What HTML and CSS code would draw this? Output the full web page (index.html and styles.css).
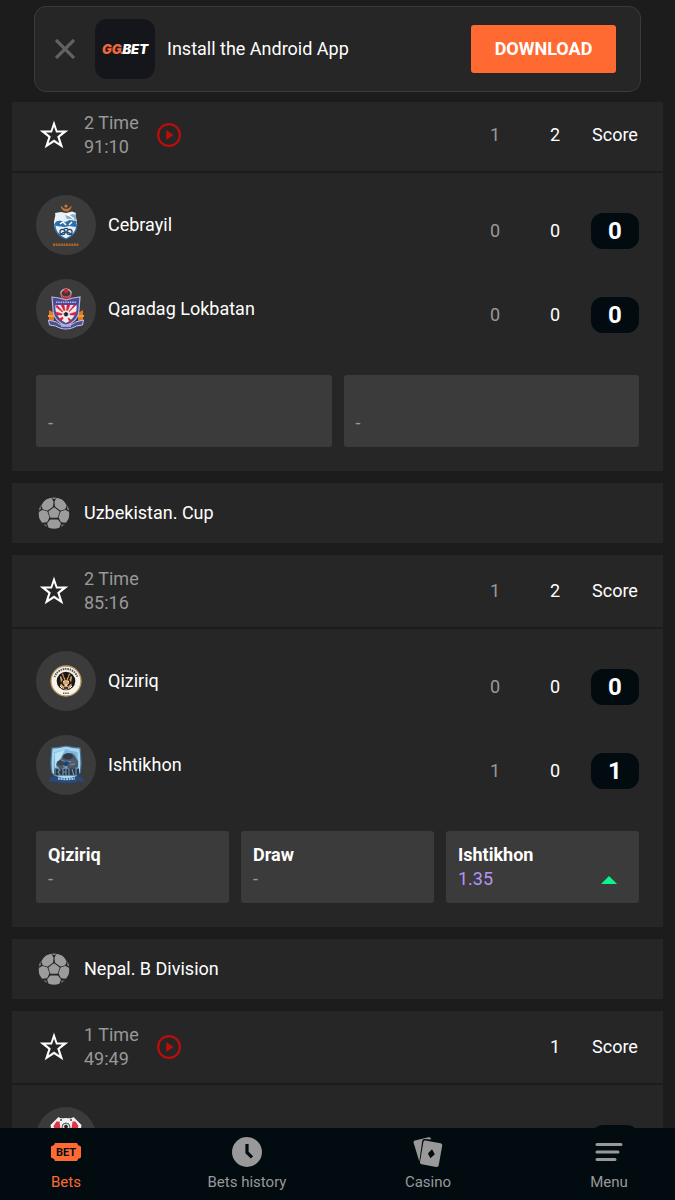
FILE: index.html
```html
<!DOCTYPE html>
<html lang="en">
<head>
    <meta charset="UTF-8">
    <meta name="viewport" content="width=device-width, initial-scale=1.0">
    <title>Live bets</title>
    <link rel="stylesheet" href="styles.css">
</head>
<body>
    <!-- Shared icons -->
    <svg class="sprite" aria-hidden="true">
        <symbol id="star" viewBox="0 0 30 30">
            <path fill-rule="evenodd" fill="#fff" d="M15 .6L18.300 10.400H29.300L20.700 17.200 24.300 28.300 15 22.200 5.700 28.300 9.300 17.200.7 10.400H11.700zM15 6.800L13 12.600H6.900L11.800 16.600 9.600 23.200 15 19.600 20.400 23.200 18.200 16.600 23.100 12.600H17z"/>
        </symbol>
        <symbol id="play" viewBox="0 0 24 24">
            <circle cx="12" cy="12" r="10.9" fill="none" stroke="#be0b0b" stroke-width="2.2"/>
            <path d="M9.2 7l7.4 5-7.4 5z" fill="#be0b0b"/>
        </symbol>
        <symbol id="ball" viewBox="0 0 32 32">
            <clipPath id="ball-clip"><circle cx="16" cy="16" r="15.400"/></clipPath>
            <g clip-path="url(#ball-clip)" fill="#9c9c9c" stroke="#9c9c9c" stroke-width="2.400" stroke-linejoin="round">
                <path d="M16 11.8l4.3 3.2-1.5 4.6h-5.6L11.700 15z"/>
                <path d="M4.600 8.500L8.300 2.300l4.700 0 1.300 2.700-.4 4-4.500 3.300-3.700-.9z"/>
                <path d="M27.400 8.500L23.700 2.300l-4.700 0-1.300 2.700.4 4 4.500 3.300 3.700-.9z"/>
                <path d="M1.700 15.800l2.800-1.600 4 1.200 1.700 4.900-1.800 3.700-4.400.5-2.800-3z"/>
                <path d="M30.300 15.800l-2.800-1.600-4 1.200-1.700 4.900 1.800 3.700 4.400.5 2.800-3z"/>
                <path d="M12.700 23.700h6.600l2.300 3-1.800 5.300h-7.600l-1.800-5.300z"/>
            </g>
            <g clip-path="url(#ball-clip)" fill="#888">
                <path d="M13.500 0h5l-1.300 1.900h-2.400zM0 7h2l1 5-3 2zM32 7h-2l-1 5 3 2zM5 27.500l3.300.2.6 3-2 0zM27 27.500l-3.300.2-.6 3 2 0z"/>
            </g>
        </symbol>
    </svg>

    <div class="app">
        <header class="top">
            <div class="banner">
                <button type="button" class="banner-close" aria-label="Close">
                    <svg width="20" height="20" viewBox="0 0 20 20"><path d="M1 1l18 18M19 1L1 19" stroke="#626262" stroke-width="3.200"/></svg>
                </button>
                <div class="app-logo"><span class="gg">GG</span><span class="dot">.</span>BET</div>
                <p class="banner-text">Install the Android App</p>
                <button type="button" class="download">DOWNLOAD</button>
            </div>
        </header>

        <main class="content">
            <section class="card">
                <div class="card-head">
                    <button type="button" class="fav" aria-label="Favourite"><svg width="30" height="30"><use href="#star"/></svg></button>
                    <div class="time">2 Time<br>91:10</div>
                    <button type="button" class="stream" aria-label="Watch"><svg width="24" height="24"><use href="#play"/></svg></button>
                    <div class="scores">
                        <span class="past">1</span>
                        <span>2</span>
                        <span>Score</span>
                    </div>
                </div>
                <div class="card-body">
                    <div class="team">
                        <div class="team-logo">
                            <svg width="60" height="60" viewBox="0 0 60 60">
                                <path d="M25.500 11.500c.5 6 9 6 9.500 0-2 3.800-7.500 3.800-9.500 0z" fill="#c97a35" stroke="#c97a35"/>
                                <circle cx="30" cy="11" r="1.600" fill="#c97a35"/>
                                <path d="M19 18l6-1 5 1 6-1.500 4 1.500c-1 3 1 6 1 10 0 8-4 13-11 16-7-3-12-8-12-16 0-4 2-7 1-10z" fill="#e9f0f6"/>
                                <path d="M18.500 29c1-3 4-4 7-3l4 1 4-2 7 1c0 3 0 4-1 6l-6-1-5 1-8-1z" fill="#2c6dab"/>
                                <path d="M29 20l3 1 5-2 3 1v5l-5-1-4 0z" fill="#8eadc8"/>
                                <path d="M31 19l7 5M24 29l3-2 3 3M33 30l3-3" stroke="#fff" stroke-width="1.500" fill="none"/>
                                <path d="M19 29c-1 7 4 12 11 15 7-3 11-8 11-15" fill="none" stroke="#2c6dab" stroke-width="1.300"/>
                                <g fill="none" stroke="#23466c" stroke-width="1.200"><circle cx="26.500" cy="37" r="2.600"/><circle cx="33.500" cy="37" r="2.600"/><path d="M24 40c4-4 8-4 12 0M27 35c2-2 4-2 6 0"/></g>
                                <path d="M17 49.700h26" stroke="#a8652d" stroke-width="2.400" stroke-dasharray="2 .6"/>
                            </svg>
                        </div>
                        <div class="team-name">Cebrayil</div>
                        <div class="scores">
                            <span class="past">0</span>
                            <span>0</span>
                            <span class="total">0</span>
                        </div>
                    </div>
                    <div class="team">
                        <div class="team-logo">
                            <svg width="60" height="60" viewBox="0 0 60 60">
                                <path d="M25 15c-1-3 3-5 5-5s6 2 5 5" fill="none" stroke="#d3a7ad" stroke-width="1.300"/>
                                <path d="M25 15c0 8 10 8 10 0-2 4-8 4-10 0z" fill="#c62536" stroke="#ee7d88" stroke-width=".8"/>
                                <circle cx="30" cy="12" r="2.200" fill="#ce2435"/>
                                <path d="M13 31l5 3v8l-5-1zM47 31l-5 3v8l5-1z" fill="#e07b20"/>
                                <path d="M12 37h6M42 37h6" stroke="#f09b42" stroke-width="2"/>
                                <path d="M16 18l7 1 7 2 7-2 7-1-1 12c0 9-5 13-13 17-8-4-13-8-13-17z" fill="#4a4a9a" stroke="#b9b8d7" stroke-width="1.200"/>
                                <path d="M19.500 26h21c1 8-3 14-10.500 18-7.500-4-11.500-10-10.500-18z" fill="#f2e8ec"/>
                                <path d="M30 36L20 28l1-2zM30 36l-5-10h3zM30 36l1-10h3zM30 36l8-10h2zM30 36l10-3-1 3zM30 36l6 6-2 1zM30 36l-5 6-2-2zM30 36l-9 0-1-3z" fill="#d92139" stroke="#d92139" stroke-width=".5"/>
                                <path d="M20 23.200h20" stroke="#bbb9dc" stroke-width="1.500" stroke-dasharray="1.500 .8"/>
                                <circle cx="30" cy="35.500" r="4" fill="#eee"/>
                                <path d="M30 33l2 1.600-.8 2.500h-2.400l-.8-2.500zM26.500 35h1M32.500 35h1" fill="#222" stroke="#222" stroke-width=".5"/>
                                <path d="M12.500 41l8 2c2 4 17 4 19 0l8-2-1 5-6 1c-7 4-14 4-21 0l-6-1z" fill="#4b4d9e" stroke="#c7c6df"/>
                                <path d="M25 47h10" stroke="#b8b8dc" stroke-width="1.600"/>
                            </svg>
                        </div>
                        <div class="team-name">Qaradag Lokbatan</div>
                        <div class="scores">
                            <span class="past">0</span>
                            <span>0</span>
                            <span class="total">0</span>
                        </div>
                    </div>
                    <div class="odds">
                        <button type="button" class="odd">
                            <span class="odd-name"></span>
                            <span class="odd-value">-</span>
                        </button>
                        <button type="button" class="odd">
                            <span class="odd-name"></span>
                            <span class="odd-value">-</span>
                        </button>
                    </div>
                </div>
            </section>

            <h2 class="league"><svg width="32" height="32"><use href="#ball"/></svg>Uzbekistan. Cup</h2>

            <section class="card">
                <div class="card-head">
                    <button type="button" class="fav" aria-label="Favourite"><svg width="30" height="30"><use href="#star"/></svg></button>
                    <div class="time">2 Time<br>85:16</div>
                    <div class="scores">
                        <span class="past">1</span>
                        <span>2</span>
                        <span>Score</span>
                    </div>
                </div>
                <div class="card-body">
                    <div class="team">
                        <div class="team-logo">
                            <svg width="60" height="60" viewBox="0 0 60 60">
                                <circle cx="30" cy="30" r="15" fill="#f8f4ec" stroke="#bc9a65" stroke-width="1.300"/>
                                <path d="M18.500 26a12.200 12.200 0 0 1 23 0" fill="none" stroke="#555" stroke-width="2" stroke-dasharray="1.300 .9 1.700 .8"/>
                                <path d="M27 42.200h6" stroke="#555" stroke-width="1.600" stroke-dasharray="1.400 .8"/>
                                <circle cx="30" cy="30" r="9.300" fill="#1d1712"/>
                                <path d="M24 26l3-4 1 4 2 2 2-2 1-4 3 4-1 6 1 3-3 3-3 1-3-1-3-3 1-3z" fill="#d2a169"/>
                                <path d="M25.500 24l2 5-2 3 3 3M34.500 24l-2 5 2 3-3 3M30 24v5M28 37h4" fill="none" stroke="#1d1712" stroke-width="1.500"/>
                                <path d="M27 30l1.500 1M33 30l-1.500 1M28.500 34h3M24 35l2 2M36 35l-2 2" stroke="#fff"/>
                            </svg>
                        </div>
                        <div class="team-name">Qiziriq</div>
                        <div class="scores">
                            <span class="past">0</span>
                            <span>0</span>
                            <span class="total">0</span>
                        </div>
                    </div>
                    <div class="team">
                        <div class="team-logo">
                            <svg width="60" height="60" viewBox="0 0 60 60">
                                <path d="M16 13c5 0 9-1 14-2 5 1 9 2 14 2 1 9 2 18 0 25-3 4-8 7-14 9-6-2-11-5-14-9-2-7-1-16 0-25z" fill="#a8d5f0" stroke="#426f9a" stroke-width="1.200"/>
                                <path d="M18.500 17c5-1 8-1 11.500-3 4 2 7 2 11.500 3l1 16h-25z" fill="#7eb5dc"/>
                                <path d="M19 18l10-3-8 14-2 4z" fill="#b9e2f6"/>
                                <path d="M26 23c0-3 3-5 7-5s6 2 7 5l2 3v6l-6 3-6-3-6 2-4-4 1-3z" fill="#4c5865"/>
                                <ellipse cx="32" cy="21.500" rx="5" ry="3" fill="#303a46"/>
                                <ellipse cx="25" cy="28" rx="4" ry="2.500" fill="#38444f"/>
                                <ellipse cx="37" cy="27" rx="4" ry="2.500" fill="#52606b"/>
                                <path d="M24 24l5 3M29 26l6 1M34 30l5-1M27 31l5 1" stroke="#7893aa"/>
                                <path d="M29 26l4 1-2 4-3-1z" fill="#193f78"/>
                                <path d="M18 37h25" stroke="#26384d" stroke-width="7"/>
                                <path d="M19 34v7M22 34l2 1-2 2 2 3-2 1M27 34v7M27 37h3M30 34v7M33 34v7M36 34l2 7M40 34v7" fill="none" stroke="#7b93a7" stroke-width="1.100"/>
                                <path d="M14 42l6-1c6 3 15 3 21 0l6 2 1 4-5-1c-8 3-18 3-26 0l-4 1z" fill="#244b7c"/>
                                <path d="M22 43.500c5 1 11 1 17 0" fill="none" stroke="#a4c8e5" stroke-width="2" stroke-dasharray="2 .7"/>
                            </svg>
                        </div>
                        <div class="team-name">Ishtikhon</div>
                        <div class="scores">
                            <span class="past">1</span>
                            <span>0</span>
                            <span class="total">1</span>
                        </div>
                    </div>
                    <div class="odds">
                        <button type="button" class="odd">
                            <span class="odd-name">Qiziriq</span>
                            <span class="odd-value">-</span>
                        </button>
                        <button type="button" class="odd">
                            <span class="odd-name">Draw</span>
                            <span class="odd-value">-</span>
                        </button>
                        <button type="button" class="odd">
                            <span class="odd-name">Ishtikhon</span>
                            <span class="odd-value active">1.35 <svg width="36" height="10" viewBox="0 0 36 10"><path d="M18 2l8 8H10z" fill="#0bf58a"/></svg></span>
                        </button>
                    </div>
                </div>
            </section>

            <h2 class="league"><svg width="32" height="32"><use href="#ball"/></svg>Nepal. B Division</h2>

            <section class="card">
                <div class="card-head">
                    <button type="button" class="fav" aria-label="Favourite"><svg width="30" height="30"><use href="#star"/></svg></button>
                    <div class="time">1 Time<br>49:49</div>
                    <button type="button" class="stream" aria-label="Watch"><svg width="24" height="24"><use href="#play"/></svg></button>
                    <div class="scores">
                        <span>1</span>
                        <span>Score</span>
                    </div>
                </div>
                <div class="card-body">
                    <div class="team">
                        <div class="team-logo">
                            <svg width="60" height="60" viewBox="0 0 60 60">
                                <path d="M14.500 18l8-8c2 2 4 1 7.500 1s5.500 1 7.500-1l8 8c-2 14-6 22-15.500 28-9.500-6-13.500-14-15.500-28z" fill="#f3f1f1"/>
                                <path d="M17.500 19l3-4.500 3 0 1 7.500h-6zM42.500 19l-3-4.500-3 0-1 7.500h6z" fill="#e03345"/>
                                <path d="M24 13h2M34 13h2" stroke="#444" stroke-width="1.300"/>
                                <circle cx="30" cy="20" r="4" fill="#ddd" stroke="#555"/>
                                <path d="M28 19l2-1.500 2 1.500-.8 2.500h-2.400z" fill="#222"/>
                            </svg>
                        </div>
                        <div class="team-name"></div>
                        <div class="scores">
                            <span class="total"></span>
                        </div>
                    </div>
                </div>
            </section>
        </main>

        <nav class="tabs">
            <a href="#" class="tab current">
                <svg width="30" height="30" viewBox="0 0 30 30">
                    <path d="M4 6h22l1 2 3 1.500v11L27 22l-1 2H4l-1-2-3-1.500v-11L3 8z" fill="#ff6a33"/>
                    <text x="15" y="19" text-anchor="middle" class="bet-text">BET</text>
                </svg>
                Bets
            </a>
            <a href="#" class="tab">
                <svg width="30" height="30" viewBox="0 0 30 30">
                    <circle cx="15" cy="15" r="15" fill="#999"/>
                    <path d="M15 7v8.500l5 4.800" fill="none" stroke="#010b10" stroke-width="3.200"/>
                </svg>
                Bets history
            </a>
            <a href="#" class="tab">
                <svg width="30" height="30" viewBox="0 0 30 30">
                    <path d="M2 3.500L15.500.2c1-.2 2 .2 2.300 1.300l.2.900-6-.3c-1.500-.1-2.600.8-2.800 2.200L6.300 24.500.6 5.800C.3 4.700.9 3.800 2 3.500z" fill="#999"/>
                    <path d="M12.500 3.500l15 2.700c1.300.3 2 1.300 1.700 2.500l-3.500 19.500c-.2 1.200-1.200 1.900-2.500 1.700L8.700 27.300c-1.200-.2-1.900-1.200-1.700-2.400l3.300-19.700c.2-1.200 1.100-1.900 2.200-1.700z" fill="#999"/>
                    <path d="M19 12.300l2.800 4.900-4.400 4.100-2.500-4.900z" fill="#010b10"/>
                </svg>
                Casino
            </a>
            <a href="#" class="tab">
                <svg width="30" height="30" viewBox="0 0 30 30">
                    <path d="M3 7.500h24M3 15h21M3 22.500h18" stroke="#999" stroke-width="3" stroke-linecap="round"/>
                </svg>
                Menu
            </a>
        </nav>
    </div>
</body>
</html>
```

FILE: styles.css
```css
* {
    box-sizing: border-box;
}
body {
    margin: 0;
    background: #1c1c1c;
    color: #fff;
    font-family: Roboto, "Liberation Sans", sans-serif;
    font-size: 18px;
    line-height: 24px;
}
button {
    padding: 0;
    border: none;
    background: none;
    color: inherit;
    font: inherit;
    cursor: pointer;
}
svg {
    display: block;
    flex: none;
}
.sprite {
    position: absolute;
    width: 0;
    height: 0;
}
.app {
    display: flex;
    flex-direction: column;
    height: 100vh;
}

/* App banner */
.top {
    flex: none;
    padding: 6px 34px 10px;
    background: #1c1c1c;
    z-index: 1;
}
.banner {
    display: flex;
    align-items: center;
    padding: 12px 24px 12px 0;
    border: 1px solid #3b3b3b;
    border-radius: 12px;
    background: #262626;
}
.banner-close {
    display: flex;
    justify-content: center;
    width: 60px;
}
.app-logo {
    display: flex;
    align-items: center;
    justify-content: center;
    width: 60px;
    height: 60px;
    border-radius: 12px;
    background: #14161b;
    font: italic 900 13px Inter, sans-serif;
}
.app-logo .gg,
.app-logo .dot {
    color: #f0693a;
}
.app-logo .dot {
    margin: 0 -2px;
}
.banner-text {
    flex: 1;
    margin: 0 12px;
}
.download {
    min-width: 145px;
    height: 48px;
    border-radius: 3px;
    background: #ff6a33;
    font-weight: 700;
}

/* Matches */
.content {
    flex: 1;
    min-height: 0;
    padding: 0 12px;
    overflow: auto;
    scrollbar-width: none;
}
.card,
.league {
    margin: 0 0 12px;
    background: #262626;
}
.card:first-child {
    margin-top: -3px;
}
.card-head {
    display: flex;
    align-items: center;
    height: 74px;
    padding: 0 24px;
    border-bottom: 2px solid #1c1c1c;
}
.fav {
    display: flex;
    justify-content: center;
    width: 36px;
    margin-right: 12px;
}
.time {
    color: #999;
}
.stream {
    margin-left: 18px;
}
.scores {
    display: flex;
    align-items: center;
    gap: 12px;
    margin-left: auto;
    text-align: center;
}
.scores span {
    width: 48px;
}
.scores .past {
    color: #999;
}
.scores .total {
    height: 36px;
    border-radius: 12px;
    background: #010b10;
    font-size: 24px;
    font-weight: 700;
    line-height: 36px;
}
.card-body {
    padding: 22px 24px 24px;
}
.team {
    display: flex;
    height: 72px;
    margin-bottom: 12px;
}
.team-logo {
    width: 60px;
    height: 60px;
    margin-right: 12px;
    border-radius: 50%;
    background: #3b3b3b;
}
.team-name {
    line-height: 60px;
}
.odds {
    display: flex;
    gap: 12px;
    margin-top: 24px;
}
.odd {
    flex: 1;
    height: 72px;
    padding: 12px;
    border-radius: 3px;
    background: #3b3b3b;
    text-align: left;
}
.odd-name {
    display: block;
    height: 24px;
    font-weight: 700;
}
.odd-value {
    display: flex;
    align-items: center;
    justify-content: space-between;
    color: #999;
}
.odd-value.active {
    color: #b394f5;
}
.league {
    display: flex;
    align-items: center;
    gap: 14px;
    height: 60px;
    padding: 0 26px;
    font-size: 18px;
    font-weight: 400;
}

/* Bottom navigation */
.tabs {
    display: flex;
    flex: none;
    justify-content: space-between;
    height: 72px;
    padding: 9px 24px 0;
    background: #010b10;
    z-index: 1;
}
.tab {
    display: flex;
    flex-direction: column;
    align-items: center;
    gap: 3px;
    width: 84px;
    color: #999;
    font-size: 15px;
    text-decoration: none;
    white-space: nowrap;
}
.tab.current {
    color: #ff6a33;
}
.bet-text {
    fill: #010b10;
    font-size: 11px;
    font-weight: 700;
}
```
